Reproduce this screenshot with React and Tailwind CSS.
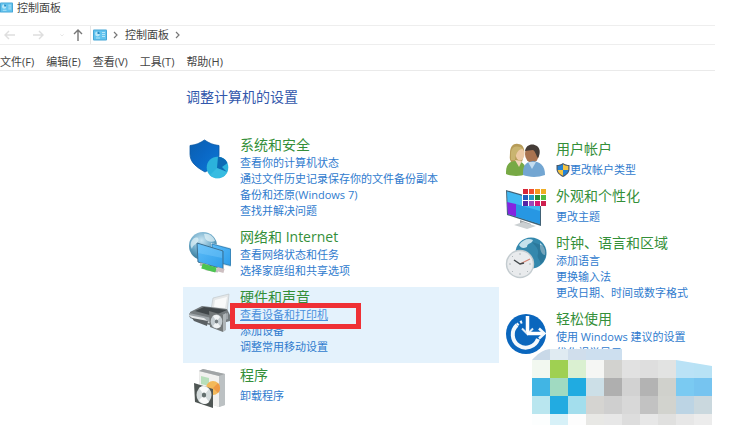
import React from "react";

function PanelIcon({ className }) {
  return (
    <svg viewBox="0 0 14 11" className={className} aria-hidden="true">
      <rect width="14" height="11" rx="1" fill="#45a5d6" />
      <rect x="1" y="1" width="12" height="9" fill="#62c3ee" />
      <circle cx="4.500" cy="4.500" r="2.400" fill="#b9e6f8" />
      <path d="M4.500 4.500V2.100A2.400 2.400 0 0 1 6.900 4.500Z" fill="#2389c4" />
      <path d="M9 3h3M9 5h3M9 7h3M3 8.500h4" stroke="#b5e4f7" strokeWidth="1" />
    </svg>
  );
}

function SecurityIcon() {
  return (
    <svg viewBox="0 0 42 42" className="size-[42px]" aria-hidden="true">
      <defs>
        <linearGradient id="sec" x1="0" y1="0" x2="1" y2="1">
          <stop offset="0" stopColor="#0b5fae" />
          <stop offset="0.450" stopColor="#0a67c4" />
          <stop offset="1" stopColor="#0b78d6" />
        </linearGradient>
      </defs>
      <path d="M1 6.500C7 6 11 4 15.500 1C20 4 24 6 30 6.500V16C30 24 24 29 16 33C7 28 1 23 1 15Z" fill="url(#sec)" stroke="#0a59a5" strokeWidth="0.800" />
      <circle cx="28.500" cy="28.500" r="10.800" fill="#2bb2dc" />
      <path d="M28 29L29 17.700A10.800 10.800 0 0 1 38.500 24L33 28L38 33Z" fill="#0b6bb5" />
      <path d="M21 36A10.800 10.800 0 0 0 38.500 33L28 29Z" fill="#46c6e6" opacity="0.500" />
    </svg>
  );
}

function NetworkIcon() {
  return (
    <svg viewBox="0 0 44 42" className="h-[42px] w-[44px]" aria-hidden="true">
      <defs>
        <radialGradient id="globe" cx="0.450" cy="0.300" r="0.750">
          <stop offset="0" stopColor="#c9e5f2" />
          <stop offset="0.550" stopColor="#68a6c6" />
          <stop offset="1" stopColor="#2f718f" />
        </radialGradient>
        <linearGradient id="screen" x1="0" y1="0" x2="1" y2="1">
          <stop offset="0" stopColor="#5dbcf8" />
          <stop offset="1" stopColor="#2f9eea" />
        </linearGradient>
      </defs>
      <circle cx="15" cy="15" r="14" fill="url(#globe)" />
      <path d="M5 8C9 5 12 7 10 11C8 14 5 13 4 18C2 15 2 11 5 8ZM16 3C21 2 26 6 27 10C23 12 18 10 17 7Z" fill="#e0f1f7" opacity="0.750" />
      <path d="M23 12L43 17V36L24 31Z" fill="#d6e5ed" />
      <path d="M24 13L42.500 18V34.500L25 30Z" fill="url(#screen)" stroke="#2678b0" strokeWidth="0.800" />
      <path d="M9 12L35 20V38L10 31Z" fill="url(#screen)" stroke="#3d6f8f" strokeWidth="1" />
      <path d="M10 13L34 20V27L10 22Z" fill="#91d6ff" opacity="0.300" />
      <path d="M12 33L19 35V38L30 40" fill="none" stroke="#b9b9b9" strokeWidth="3" />
      <path d="M14 35L28 39" stroke="#4cc550" strokeWidth="5" />
      <path d="M29 38L36 40" stroke="#cdbfc1" strokeWidth="4" />
    </svg>
  );
}

function DiscCase({ x, y }) {
  return (
    <g transform={`translate(${x} ${y})`}>
      <path d="M0 0L14 4V21L1 16Z" fill="#737879" />
      <path d="M14 4L17 2V19L14 21Z" fill="#aeb4b7" />
      <ellipse cx="7.500" cy="10.500" rx="5.800" ry="7" fill="#c5cdd1" />
      <path d="M7.500 10.500L4 5C6 3.500 9 3.500 11 6ZM7.500 10.500L11.500 15.500C9 18 6 17.500 4 15Z" fill="#f0f3f4" />
      <ellipse cx="7.500" cy="10.500" rx="1.700" ry="2" fill="#737b7e" />
    </g>
  );
}

function PrinterIcon() {
  return (
    <svg viewBox="0 0 44 40" className="mt-0.5 h-[40px] w-[44px]" aria-hidden="true">
      <path d="M25 5L41 1L39 20L23 17Z" fill="#e5e8e9" stroke="#bcc3c6" strokeWidth="0.600" />
      <path d="M27 7L39 4L37 15L26 14Z" fill="#f9fafa" />
      <path d="M2 19L14 13L39 16L42 22V28L24 33L2 25Z" fill="#747a7d" />
      <path d="M7 18L16 14L39 17L25 23Z" fill="#41474a" />
      <path d="M1 20L24 25L40 20V26L25 31L1 24Z" fill="#9da4a8" />
      <path d="M0 22L16 25L22 30L9 28Z" fill="#e5e8ea" />
      <path d="M4 25L20 28L19 33L6 28Z" fill="#5b6164" />
      <DiscCase x={21} y={18} />
    </svg>
  );
}

function ProgramsIcon() {
  return (
    <svg viewBox="0 0 34 40" className="h-[40px] w-[34px]" aria-hidden="true">
      <path d="M6 2L10 0L32 5V36L26 38L7 31Z" fill="#c6cacc" />
      <path d="M6 2L26 7V38L7 32Z" fill="#f1f1ef" />
      <path d="M26 7L32 5V36L26 38Z" fill="#bcc1c3" />
      <path d="M6 2L10 0L32 5L26 7Z" fill="#a1a5a6" />
      <path d="M8 7L16 9V17L8 15Z" fill="#b7dfbb" />
      <circle cx="20" cy="19" r="7" fill="#f3b95a" />
      <path d="M20 19L25 14A7 7 0 0 1 25 24Z" fill="#ee9a45" />
      <path d="M1 14L20 20V39L2 33Z" fill="#4f5654" />
      <ellipse cx="11" cy="26" rx="7.500" ry="9" fill="#d5dcdd" />
      <path d="M11 26L6 19C9 16 13 17 16 20ZM11 26L16 33C12 37 8 34 6 31Z" fill="#fafbfb" />
      <ellipse cx="11" cy="26" rx="2.200" ry="2.600" fill="#65706f" />
    </svg>
  );
}

function UsersIcon() {
  return (
    <svg viewBox="0 0 40 34" className="h-[34px] w-[40px]" aria-hidden="true">
      <path d="M4 10C4 3 8 0 12 1C17 1 19 6 18 11L16 19H5C3 16 4 13 4 10Z" fill="#b79c58" />
      <ellipse cx="14" cy="11" rx="4.500" ry="6.500" fill="#ecc9a5" />
      <path d="M5 9C6 3 12 2 17 6C13 6 10 9 9 17H5Z" fill="#c9b470" />
      <path d="M0 29C0 21 4 18 10 18C17 18 20 22 21 31C13 34 4 33 0 31Z" fill="#77a945" />
      <path d="M9 17L13 24L16 18Z" fill="#f0d4b7" />
      <ellipse cx="26" cy="11" rx="7" ry="9" fill="#a97350" />
      <path d="M19 8C20 1 27 0 31 3C35 6 34 12 32 15C30 13 30 9 27 7Z" fill="#443c37" />
      <path d="M17 30C17 21 21 19 27 18C34 19 39 22 39 32C31 35 22 34 17 32Z" fill="#73a6d2" />
      <path d="M22 19L26 26L30 19Z" fill="#c3dcef" />
    </svg>
  );
}

const swatches = [
  ["#d72638", "#ef4d2e", "#f49a20", "#efad22"],
  ["#245fbe", "#1e9bc6", "#278c36", "#51bd41"],
  ["#5526a5", "#9c49ba", "#d51873", "#ce204f"],
];

function AppearanceIcon() {
  return (
    <svg viewBox="0 0 42 42" className="-mt-0.5 size-[42px]" aria-hidden="true">
      <path d="M15 32L26 36V39L15 36Z" fill="#a0a5a8" />
      <path d="M9 37L18 34L31 38L22 41Z" fill="#cbd0d2" />
      <path d="M1 2L36 12V38L2 27Z" fill="#416276" />
      <path d="M2 3.500L35 13V36L3 26Z" fill="#40b8f2" />
      <path d="M2 14L11 16V28.500L3 26Z" fill="#8424df" />
      <path d="M11 16L35 23V36L11 28.500Z" fill="#2797e3" />
      <rect x="17" y="0" width="24" height="18" fill="#fff" />
      {swatches.map((row, r) =>
        row.map((color, c) => (
          <rect key={color} x={18 + c * 6} y={1 + r * 6} width="5" height="5" fill={color} />
        ))
      )}
    </svg>
  );
}

function ClockIcon() {
  return (
    <svg viewBox="0 0 42 42" className="size-[42px]" aria-hidden="true">
      <circle cx="26" cy="16" r="15.500" fill="#3488ad" />
      <path d="M14 8C18 2 24 1 28 3C27 7 22 6 22 10C18 12 16 11 14 8ZM35 6C39 9 41 13 40 18C37 18 35 13 35 10Z" fill="#c5e1ec" />
      <path d="M27 5C30 9 34 11 33 17C31 22 37 23 35 28C40 24 43 16 39 9Z" fill="#216889" opacity="0.500" />
      <circle cx="15" cy="27" r="14.200" fill="#c4ccd0" />
      <circle cx="15" cy="27" r="12.800" fill="#e9ebed" />
      <path d="M15 16V18M15 36V38M4 27H6M24 27H26M7 19L8 20M22 34L23 35M7 35L8 34" stroke="#a9b2b7" strokeWidth="0.900" />
      <path d="M15 27L25 22" stroke="#d58474" strokeWidth="1.200" />
      <path d="M9 23L15 27L19 26" fill="none" stroke="#43484b" strokeWidth="1.500" />
    </svg>
  );
}

function EaseIcon() {
  return (
    <svg viewBox="0 0 42 42" className="size-[42px]" aria-hidden="true">
      <circle cx="21" cy="21" r="20" fill="#0a66bd" />
      <path d="M12 12A13 13 0 1 0 33 26" fill="none" stroke="#f3f8fc" strokeWidth="4" />
      <path d="M12 12A13 13 0 0 1 18 8.500" fill="none" stroke="#f3f8fc" strokeWidth="3" strokeDasharray="2 2" />
      <path d="M22.500 3V19" stroke="#fff" strokeWidth="3.500" />
      <path d="M17 15.500L22.500 21L28 15.500" fill="none" stroke="#dceaf6" strokeWidth="2" />
      <path d="M22 20.500H38" stroke="#fff" strokeWidth="3.500" />
      <path d="M34 15.500L39.500 20.500L34 25.500" fill="none" stroke="#f3f8fc" strokeWidth="2.500" />
    </svg>
  );
}

function UacShield() {
  return (
    <svg viewBox="0 0 14 14" className="size-[14px] shrink-0" aria-hidden="true">
      <path d="M7 0C9 1.500 11 2 13.500 2V6C13.500 10 10 12.500 7 14C4 12.500 0.500 10 0.500 6V2C3 2 5 1.500 7 0Z" fill="#4b5968" />
      <path d="M7 1.300V7H1.700V3C4 3 5.500 2.300 7 1.300ZM7 7H12.300C12 9.800 9.500 11.500 7 12.700Z" fill="#2482d4" />
      <path d="M7 1.300C8.500 2.300 10 3 12.300 3V7H7ZM7 7V12.700C4.500 11.500 2 9.800 1.700 7Z" fill="#f5c542" />
    </svg>
  );
}

const leftGroups = [
  {
    title: "系统和安全",
    icon: <SecurityIcon />,
    links: ["查看你的计算机状态", "通过文件历史记录保存你的文件备份副本", "备份和还原(Windows 7)", "查找并解决问题"],
  },
  { title: "网络和 Internet", icon: <NetworkIcon />, links: ["查看网络状态和任务", "选择家庭组和共享选项"] },
  {
    title: "硬件和声音",
    icon: <PrinterIcon />,
    links: ["查看设备和打印机", "添加设备", "调整常用移动设置"],
    active: true,
    marked: 0,
  },
  { title: "程序", icon: <ProgramsIcon />, links: ["卸载程序"], loose: true },
];

const rightGroups = [
  { title: "用户帐户", icon: <UsersIcon />, links: ["更改帐户类型"], shield: true, loose: true },
  { title: "外观和个性化", icon: <AppearanceIcon />, links: ["更改主题"], loose: true },
  { title: "时钟、语言和区域", icon: <ClockIcon />, links: ["添加语言", "更换输入法", "更改日期、时间或数字格式"] },
  { title: "轻松使用", icon: <EaseIcon />, links: ["使用 Windows 建议的设置", "优化视觉显示"] },
];

function Group({ group }) {
  return (
    <section className={group.active ? "mb-0.5 flex bg-[#e4f2fc] pb-2" : "flex pb-2"}>
      <div className="flex h-9 w-[57px] shrink-0 justify-center pt-1 pr-1">
        <div className="shrink-0">{group.icon}</div>
      </div>
      <div className="min-w-0">
        <h2 className="text-[14px] leading-5 whitespace-nowrap">
          <a href="#" className="text-[#348f39]">{group.title}</a>
        </h2>
        <ul className={group.loose ? "pt-[3px]" : ""}>
          {group.links.map((link, i) => (
            <li key={link} className="relative flex h-4 items-center text-[11px] leading-4 whitespace-nowrap">
              {group.shield && <UacShield />}
              <a href="#" className={group.marked === i ? "text-[#4a90dc] underline" : "text-[#2f7bce]"}>
                {link}
              </a>
              {group.marked === i && (
                <span className="pointer-events-none absolute -top-1 -left-2.5 z-10 h-[26px] w-[131px] border-5 border-[#ef3035]" />
              )}
            </li>
          ))}
        </ul>
      </div>
    </section>
  );
}

const mosaicRows = [
  ["#c9d9e8", "#e0ebf2", "#d0deec", "#cddfef", "#cddfef"],
  ["#f2f8f0", "#9fd052", "#daf0d1", "#f5f6f4", "#d2d2cf", "#e1e1e1", "#dedede", "#e2e3e2", "#bae2f6", "#b8e2f5"],
  ["#41b5e4", "#a0dac1", "#20abe1", "#ccdfe7", "#afafaf", "#d2d2d2", "#b3b3b3", "#d0d1cc", "#7acaf2", "#76c4f0"],
  ["#b9e6ef", "#22abe1", "#a3deed", "#d5d4d1", "#cfcfcf", "#d8d8d8", "#c2c2c2", "#d2d3ce", "#bcd4e4", "#cad8de"],
  ["#fcfefe", "#d7f1f8", "#fdfdfd", "#e8e8e5", "#e7e7e7", "#dddddd", "#e7e7e7", "#e0e0df", "#e7e7e7", "#ececec"],
];

function Mosaic() {
  return (
    <svg viewBox="0 0 180 76" className="absolute right-[19px] bottom-0 h-[76px] w-[180px]" aria-hidden="true">
      <defs>
        <clipPath id="edge">
          <path d="M0 11C5 6 10 0 20 0H118L144 11L180 17V76H0Z" />
        </clipPath>
      </defs>
      <g clipPath="url(#edge)" shapeRendering="crispEdges">
        <rect width="180" height="76" fill="#fff" />
        {mosaicRows.map((row, r) =>
          row.map((color, c) => (
            <rect
              key={`${r}-${c}`}
              x={c * 18}
              y={r === 0 ? 0 : 11 + (r - 1) * 18}
              width="18"
              height={r === 0 ? 11 : 18}
              fill={color}
            />
          ))
        )}
      </g>
    </svg>
  );
}

const menus = ["文件(F)", "编辑(E)", "查看(V)", "工具(T)", "帮助(H)"];

function Arrow({ d, color, label, size }) {
  return (
    <button type="button" aria-label={label} className="flex items-center justify-center">
      <svg viewBox="0 0 12 12" className={size} fill="none" stroke={color} strokeWidth="1.400" aria-hidden="true">
        <path d={d} />
      </svg>
    </button>
  );
}

function Chevron() {
  return (
    <svg viewBox="0 0 6 8" className="h-2 w-1.5" fill="none" stroke="#777" strokeWidth="1.200" aria-hidden="true">
      <path d="M1 1L4 4L1 7" />
    </svg>
  );
}

export default function App() {
  return (
    <div className="relative min-h-screen overflow-hidden bg-white font-['Open_Sans','Noto_Sans_CJK_SC',sans-serif] text-[11px] leading-4 text-[#444]">
      <header className="pr-4">
        <div className="flex h-[25px] items-start gap-1">
          <PanelIcon className="mt-0.5 h-[11px] w-[13px]" />
          <h1 className="leading-4">控制面板</h1>
        </div>
        <div className="flex h-5 border-y border-[#eeeeee]">
          <nav className="flex w-[90px] shrink-0 items-center pr-1.5 pl-1">
            <div className="flex grow items-center gap-4">
              <Arrow label="后退" d="M11 6H1M5 2L1 6L5 10" color="#dedede" size="size-3" />
              <Arrow label="前进" d="M1 6H11M7 2L11 6L7 10" color="#dedede" size="size-3" />
              <Arrow label="最近位置" d="M1 4L6 9L11 4" color="#cccccc" size="size-1" />
            </div>
            <Arrow label="上移" d="M6 12V1M2 5L6 1L10 5" color="#777" size="size-3" />
          </nav>
          <div className="flex grow items-center gap-1.5 border-l border-[#e6e6e6] pl-0.5">
            <PanelIcon className="h-[12px] w-[14px]" />
            <Chevron />
            <a href="#">控制面板</a>
            <Chevron />
          </div>
        </div>
        <div className="flex h-[26px] items-center gap-3 border-b border-[#eaeaea] pt-2">
          {menus.map((menu) => (
            <button key={menu} type="button" className="whitespace-nowrap">
              {menu}
            </button>
          ))}
        </div>
      </header>
      <main className="grid grid-cols-[183fr_316fr_232fr] pt-4">
        <h2 className="col-span-2 col-start-2 h-12 pl-[3px] text-[14px] leading-5 text-[#3358ac]">
          调整计算机的设置
        </h2>
        <div className="col-start-2">
          {leftGroups.map((group) => (
            <Group key={group.title} group={group} />
          ))}
        </div>
        <div className="min-w-0 pt-1">
          {rightGroups.map((group) => (
            <Group key={group.title} group={group} />
          ))}
        </div>
      </main>
      <Mosaic />
    </div>
  );
}
